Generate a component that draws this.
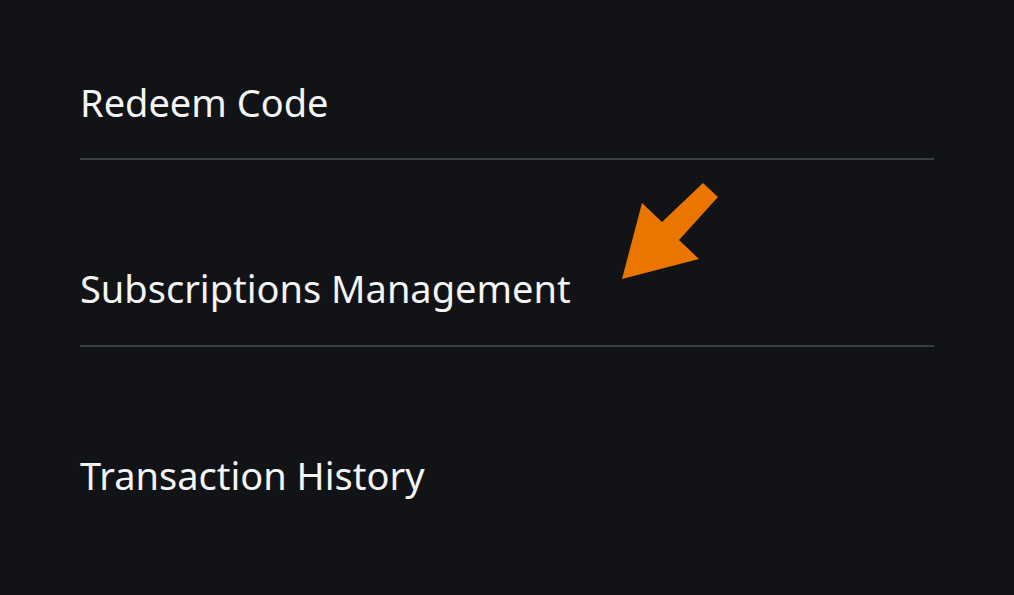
import React from 'react';

const items = [
  { label: 'Redeem Code', cls: 'pt-[82px] pb-[36px] border-b-2 border-[#3a3e44]' },
  { label: 'Subscriptions Management', cls: 'pt-[108px] pb-[37px] border-b-2 border-[#3a3e44]' },
  { label: 'Transaction History', cls: 'pt-[108px]' },
];

const App: React.FC = () => {
  return (
    <div
      className="relative h-[595px] w-[1014px] overflow-hidden bg-[#121316] px-[80px]"
      style={{ fontFamily: '"Noto Sans", "Open Sans", sans-serif' }}
    >
      <ul>
        {items.map((item) => (
          <li key={item.label} className={item.cls}>
            <span className="block text-[38px] leading-[40px] text-[#f4f4f4]">{item.label}</span>
          </li>
        ))}
      </ul>

      {/* annotation arrow */}
      <svg className="absolute left-0 top-0" width="1014" height="595" viewBox="0 0 1014 595">
        <polygon
          points="622,279 642,203 662,222 703,183 718,197 679,240 699,259"
          fill="#ea7600"
        />
      </svg>
    </div>
  );
};

export default App;
